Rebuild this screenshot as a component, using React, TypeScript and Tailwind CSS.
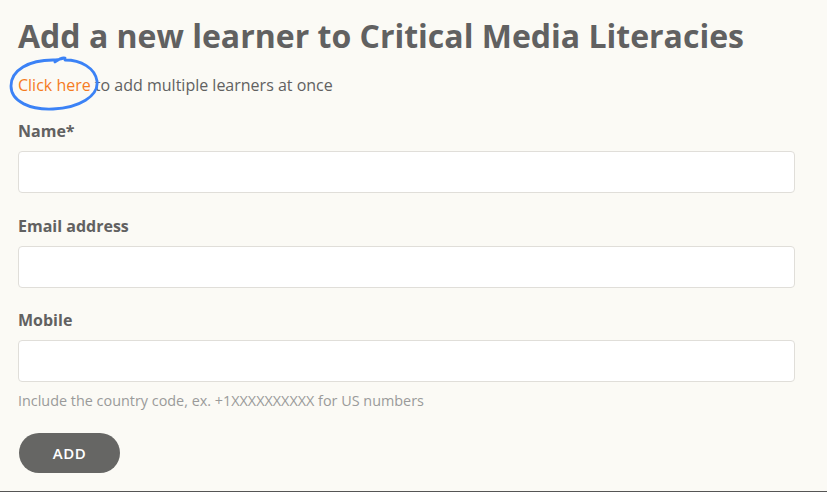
import React from "react";

export default function App() {
  return (
    <div className="min-h-[492px] w-full bg-[#fbfaf5] text-[#616161] border-b border-[#555]" style={{ fontFamily: '"Open Sans", sans-serif' }}>
      <div className="pl-[18px] pr-[32px] pt-[14px] flex flex-col">
        <h1 className="text-[32px] leading-[44px] font-bold text-[#616161]">Add a new learner to Critical Media Literacies</h1>
        <div className="relative mt-[16px] text-[16px] leading-[22px]">
          <span className="text-[#f57c1f]">Click here</span> to add multiple learners at once
          <svg className="absolute left-[-9px] top-[-18px]" width="92" height="58" viewBox="0 0 92 58" fill="none">
            <path d="M46 6 C 50 3, 53 1, 56 2 C 52 3, 48 4, 44 4 C 20 4, 2 14, 2 30 C 2 46, 22 54, 44 53 C 70 52, 90 40, 88 25 C 86 12, 72 4, 56 4" stroke="#3b82f6" strokeWidth="2.8" strokeLinecap="round" strokeLinejoin="round" />
          </svg>
        </div>
        <label className="mt-[24px] text-[16px] leading-[22px] font-bold">Name*</label>
        <input className="mt-[9px] h-[42px] w-full rounded-[4px] border border-[#e0ded9] bg-white" />
        <label className="mt-[22px] text-[16px] leading-[22px] font-bold">Email address</label>
        <input className="mt-[9px] h-[42px] w-full rounded-[4px] border border-[#e0ded9] bg-white" />
        <label className="mt-[21px] text-[16px] leading-[22px] font-bold">Mobile</label>
        <input className="mt-[9px] h-[42px] w-full rounded-[4px] border border-[#e0ded9] bg-white" />
        <p className="mt-[9px] text-[14.4px] leading-[20px] text-[#9a9a9a]">Include the country code, ex. +1XXXXXXXXXX for US numbers</p>
        <div className="mt-[22px]">
          <button className="ml-[1px] h-[40px] w-[101px] rounded-full bg-[#666664] text-white text-[15px] font-semibold tracking-[0.5px]">ADD</button>
        </div>
      </div>
    </div>
  );
}
